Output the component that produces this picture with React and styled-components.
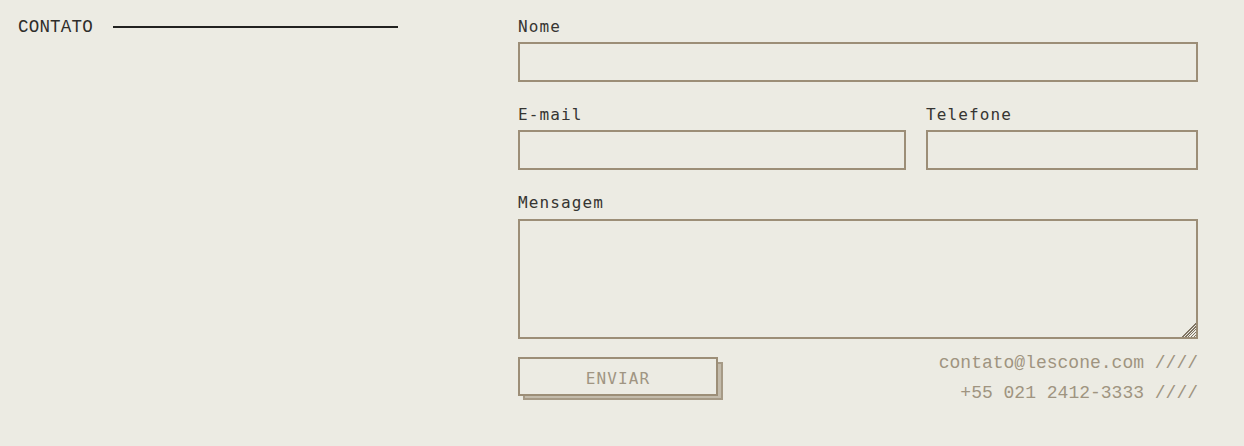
import styled, { createGlobalStyle } from "styled-components";

const GlobalStyle = createGlobalStyle`
  html, body {
    margin: 0;
    background: #ecebe3;
  }
  body {
    font-family: "DejaVu Sans Mono", "Liberation Mono", monospace;
    color: #2e2d2a;
  }
`;

const App = () => {
  return (
    <>
      <GlobalStyle />
      <StyledContact>
        <Heading>
          <HeadingText>CONTATO</HeadingText>
          <HeadingLine />
        </Heading>

        <Form onSubmit={(e) => e.preventDefault()}>
          <Field>
            <Label htmlFor="nome">Nome</Label>
            <Input id="nome" type="text" />
          </Field>

          <Row>
            <Field>
              <Label htmlFor="email">E-mail</Label>
              <Input id="email" type="email" />
            </Field>
            <Field>
              <Label htmlFor="telefone">Telefone</Label>
              <Input id="telefone" type="tel" />
            </Field>
          </Row>

          <Field>
            <Label htmlFor="mensagem">Mensagem</Label>
            <TextArea id="mensagem" />
          </Field>

          <Footer>
            <ButtonWrap>
              <SendButton type="submit">ENVIAR</SendButton>
            </ButtonWrap>
            <Info>
              <span>contato@lescone.com ////</span>
              <span>+55 021 2412-3333 ////</span>
            </Info>
          </Footer>
        </Form>
      </StyledContact>
    </>
  );
};

const StyledContact = styled.section`
  display: grid;
  grid-template-columns: 380px 680px;
  column-gap: 120px;
  align-items: start;
  padding: 16px 46px 40px 18px;
`;

const Heading = styled.div`
  display: flex;
  align-items: center;
  gap: 20px;
  height: 20px;
  margin-top: 1px;
`;

const HeadingText = styled.h2`
  margin: 0;
  font-family: "Liberation Mono", "DejaVu Sans Mono", monospace;
  font-size: 17.5px;
  font-weight: 400;
  letter-spacing: 0.2px;
  line-height: 20px;
  color: #2e2d2a;
`;

const HeadingLine = styled.span`
  flex: 1;
  height: 2px;
  background: #222220;
`;

const Form = styled.form`
  display: flex;
  flex-direction: column;
  gap: 22px;
`;

const Row = styled.div`
  display: grid;
  grid-template-columns: 1fr 272px;
  gap: 20px;
`;

const Field = styled.div`
  display: flex;
  flex-direction: column;
  gap: 5px;
`;

const Label = styled.label`
  font-size: 16px;
  line-height: 20px;
  padding-top: 1px;
  letter-spacing: 1.1px;
  color: #363532;
`;

const Input = styled.input`
  box-sizing: border-box;
  height: 40px;
  width: 100%;
  margin: 0;
  border: 2px solid #9c8e77;
  background: transparent;
  border-radius: 0;
  font: inherit;
  outline: none;
`;

const TextArea = styled.textarea`
  box-sizing: border-box;
  display: block;
  height: 120px;
  width: 100%;
  margin: 1px 0 0;
  border: 2px solid #9c8e77;
  background: transparent;
  border-radius: 0;
  font: inherit;
  outline: none;

  &::-webkit-resizer {
    background:
      linear-gradient(to bottom right, #ecebe3 50%, transparent 50%),
      repeating-linear-gradient(-45deg, transparent 0 1px, #7f7463 1px 2px);
  }
`;

const Footer = styled.div`
  display: flex;
  justify-content: space-between;
  align-items: flex-start;
  margin-top: -4px;
`;

const ButtonWrap = styled.div`
  position: relative;
  isolation: isolate;
  width: 200px;
  height: 39px;

  &::before {
    content: "";
    position: absolute;
    z-index: -1;
    left: 5px;
    top: 5px;
    width: 200px;
    height: 38px;
    box-sizing: border-box;
    border: 2px solid #a69a86;
    background: #c3bbab;
  }
`;

const SendButton = styled.button`
  box-sizing: border-box;
  display: block;
  width: 200px;
  height: 39px;
  padding: 3px 0 0;
  border: 2px solid #9c8e77;
  background: #ecebe3;
  color: #a09582;
  font-family: "DejaVu Sans Mono", monospace;
  font-size: 16px;
  letter-spacing: 1.1px;
  cursor: pointer;
`;

const Info = styled.div`
  display: flex;
  flex-direction: column;
  align-items: flex-end;
  gap: 9px;
  margin-top: -4px;
  color: #9f9480;
  font-family: "Liberation Mono", monospace;
  font-size: 18px;
  line-height: 21px;
`;

export default App;
